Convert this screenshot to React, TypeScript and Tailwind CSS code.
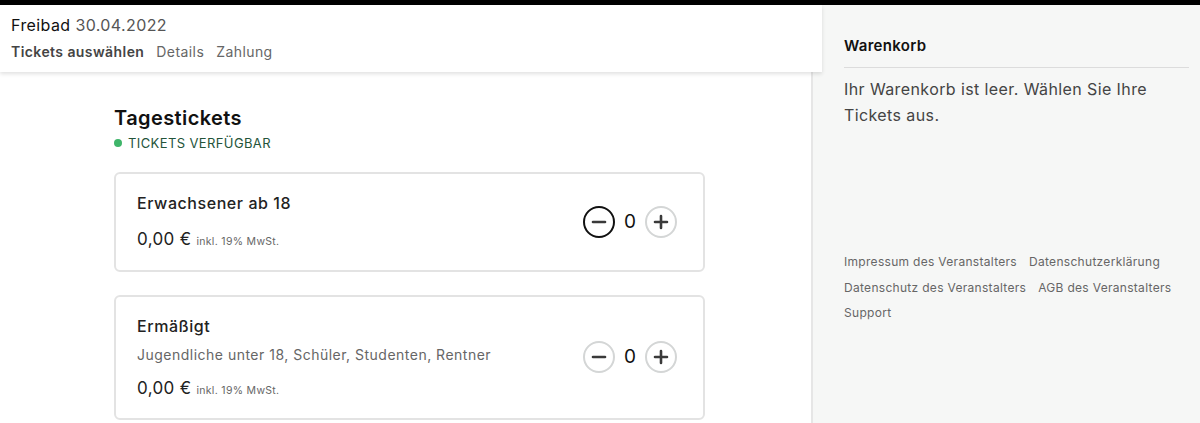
import React from "react";

const font = { fontFamily: "Inter, 'Noto Sans', sans-serif" };

function Minus({ active }: { active?: boolean }) {
  return (
    <button
      className={`w-[32px] h-[32px] rounded-full flex items-center justify-center ${
        active ? "border-2 border-[#111]" : "border-2 border-[#d4d6d6]"
      }`}
    >
      <svg width="16" height="16" viewBox="0 0 16 16">
        <path d="M2 8h12" stroke="#3a3a3a" strokeWidth="2.6" strokeLinecap="round" />
      </svg>
    </button>
  );
}

function Plus() {
  return (
    <button className="w-[32px] h-[32px] rounded-full flex items-center justify-center border-2 border-[#d4d6d6]">
      <svg width="16" height="16" viewBox="0 0 16 16">
        <path d="M2 8h12M8 2v12" stroke="#3a3a3a" strokeWidth="2.6" strokeLinecap="round" />
      </svg>
    </button>
  );
}

function Counter({ active }: { active?: boolean }) {
  return (
    <div className="flex items-center gap-[8px]">
      <Minus active={active} />
      <span className="text-[19px] text-[#111] w-[14px] text-center">0</span>
      <Plus />
    </div>
  );
}

function Price() {
  return (
    <div className="flex items-baseline gap-[5px]">
      <span className="text-[17px] tracking-[0.02em] text-[#222]">0,00 €</span>
      <span className="text-[10.5px] tracking-[0.03em] text-[#666]">inkl. 19% MwSt.</span>
    </div>
  );
}

export default function App() {
  return (
    <div style={font} className="w-[1200px] h-[423px] overflow-hidden bg-white flex flex-col">
      <div className="h-[5px] bg-black shrink-0" />
      <div className="flex flex-1 min-h-0">
        <div className="w-[811px] shrink-0 flex flex-col">
          <div className="relative z-10 w-[822px] h-[67px] bg-white shadow-[0_2px_4px_rgba(0,0,0,0.12)] px-[11px] pt-[10px]">
            <div className="text-[16px] leading-[20px] tracking-[0.025em] text-[#111]">
              Freibad <span className="text-[#555]">30.04.2022</span>
            </div>
            <div className="mt-[8px] flex gap-[12px] text-[14px] leading-[18px] tracking-[0.03em]">
              <span className="font-semibold text-[#444]">Tickets auswählen</span>
              <span className="text-[#666]">Details</span>
              <span className="text-[#666]">Zahlung</span>
            </div>
          </div>
          <div className="pl-[113px] pt-[34px] w-[705px]">
            <div className="text-[20px] leading-[24px] font-semibold tracking-[0.02em] text-[#111] ml-[1px]">Tagestickets</div>
            <div className="flex items-center gap-[6px] mt-[5px] ml-[1px]">
              <span className="w-[8px] h-[8px] rounded-full bg-[#3fb56a]" />
              <span className="text-[13px] leading-[16px] tracking-[0.03em] text-[#24543a] uppercase">Tickets verfügbar</span>
            </div>
            <div className="mt-[21px] ml-[1px] flex flex-col gap-[23px]">
              <div className="h-[100px] border-2 border-[#e3e3e3] rounded-[6px] pl-[21px] pr-[26px] flex items-center justify-between">
                <div className="flex flex-col pt-[2px]">
                  <div className="text-[16px] leading-[20px] font-medium tracking-[0.035em] text-[#222]">Erwachsener ab 18</div>
                  <div className="mt-[14px]">
                    <Price />
                  </div>
                </div>
                <div>
                  <Counter active />
                </div>
              </div>
              <div className="h-[125px] border-2 border-[#e3e3e3] rounded-[6px] pl-[21px] pr-[26px] flex items-center justify-between">
                <div className="flex flex-col pt-[2px]">
                  <div className="text-[16px] leading-[20px] font-medium tracking-[0.035em] text-[#222]">Ermäßigt</div>
                  <div className="mt-[10px] text-[14px] leading-[18px] tracking-[0.035em] text-[#666]">
                    Jugendliche unter 18, Schüler, Studenten, Rentner
                  </div>
                  <div className="mt-[12px]">
                    <Price />
                  </div>
                </div>
                <div className="-mt-[1px]">
                  <Counter />
                </div>
              </div>
            </div>
          </div>
        </div>
        <div className="flex-1 bg-[#f6f7f6] border-l-2 border-[#e6e6e6] pl-[31px] pr-[12px] pt-[32px]">
          <div className="text-[15px] leading-[18px] font-semibold tracking-[0.02em] text-[#111]">Warenkorb</div>
          <div className="mt-[12px] border-t border-[#dcdcdc]" />
          <div className="mt-[8px] text-[16px] leading-[26px] tracking-[0.025em] text-[#444]">
            Ihr Warenkorb ist leer. Wählen Sie Ihre
            <br />
            Tickets aus.
          </div>
          <div className="mt-[121px] text-[12px] leading-[25.5px] tracking-[0.025em] text-[#666] flex flex-wrap gap-x-[12px] w-[345px]">
            <span>Impressum des Veranstalters</span>
            <span>Datenschutzerklärung</span>
            <span>Datenschutz des Veranstalters</span>
            <span>AGB des Veranstalters</span>
            <span>Support</span>
          </div>
        </div>
      </div>
    </div>
  );
}
